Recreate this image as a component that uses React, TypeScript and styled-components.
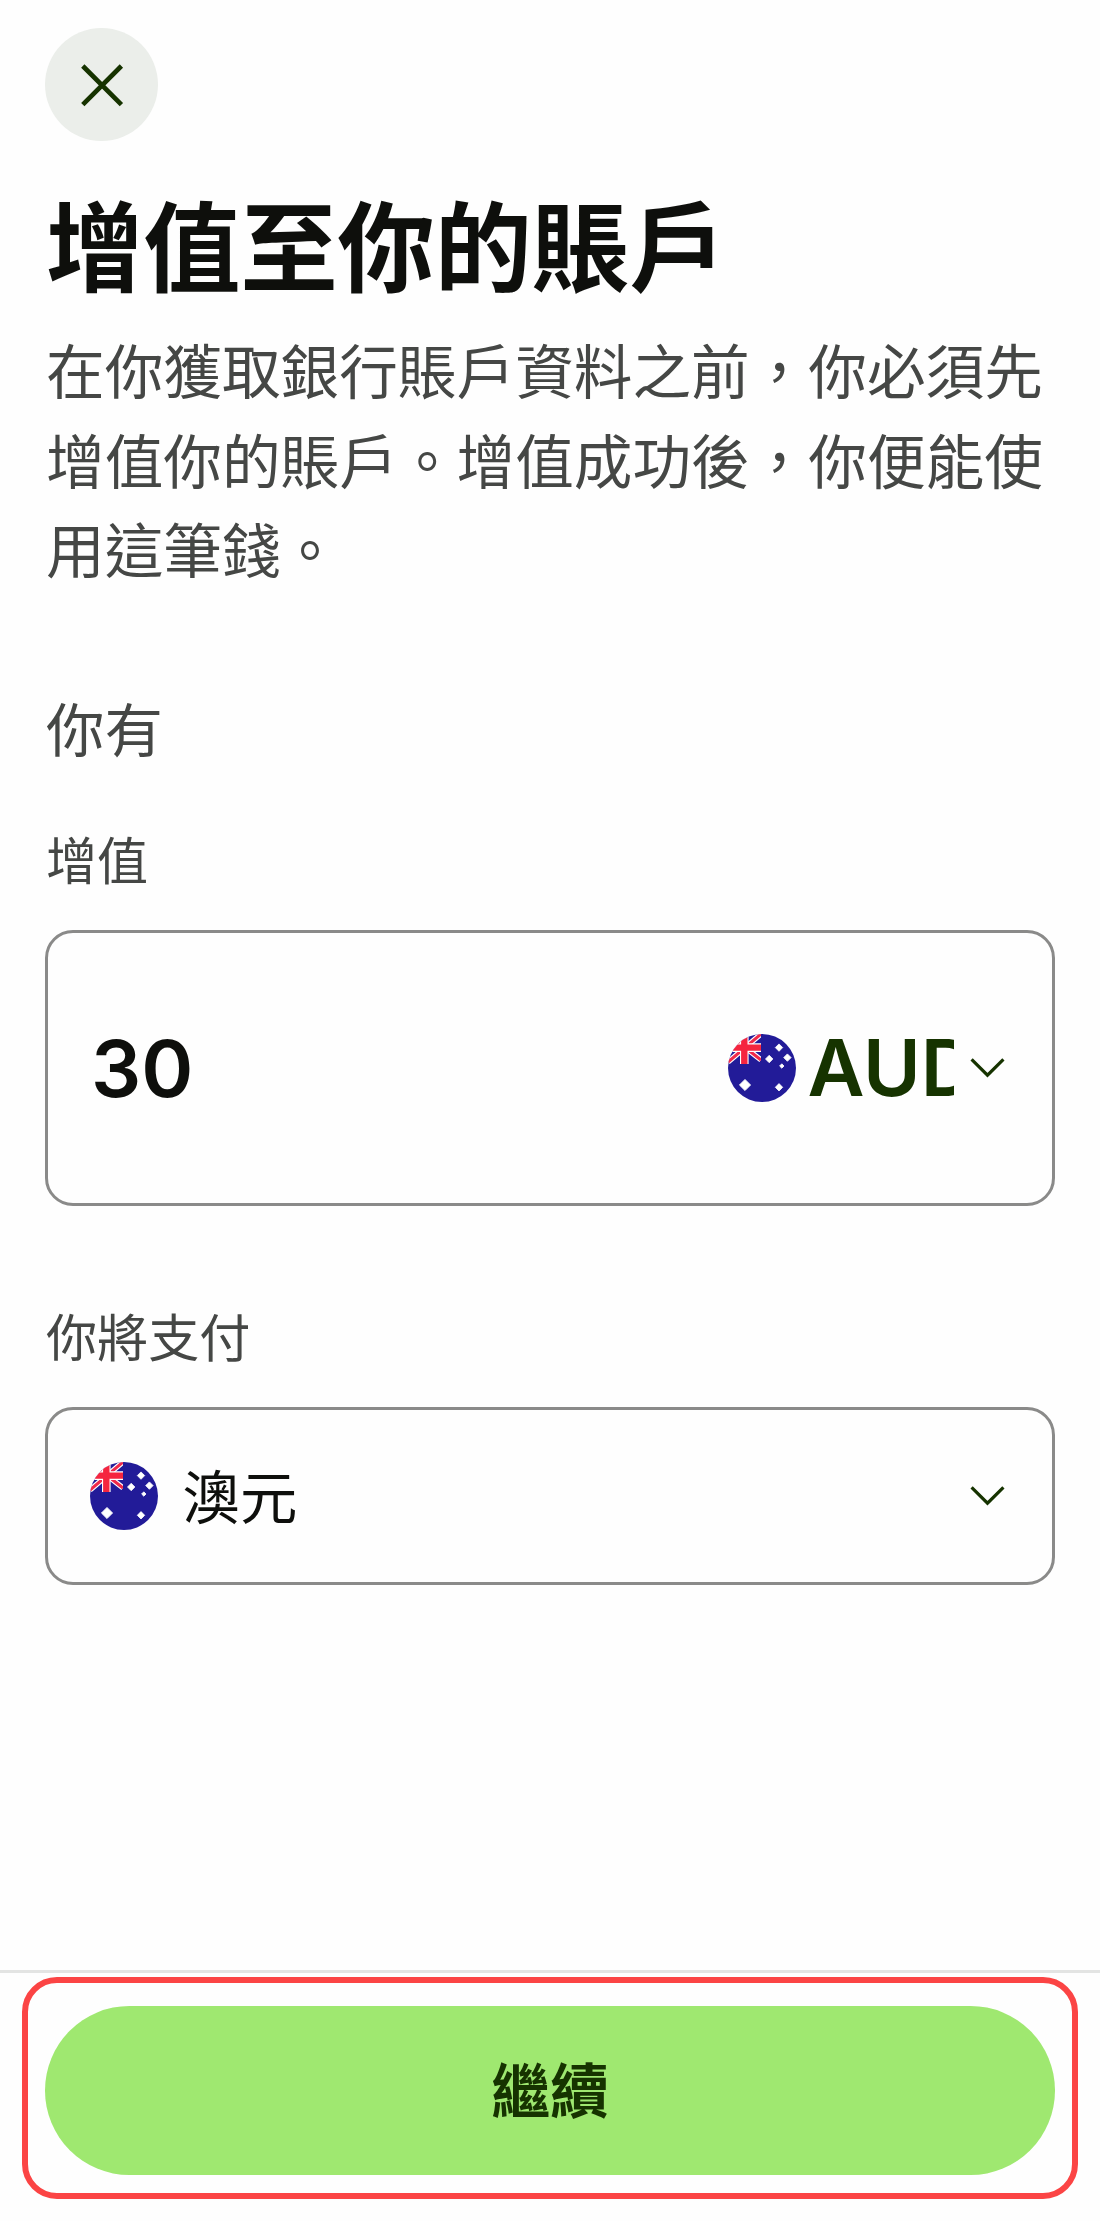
import React from "react";
import styled, { createGlobalStyle } from "styled-components";

const GlobalStyle = createGlobalStyle`
  *, *::before, *::after { box-sizing: border-box; }
  body {
    margin: 0;
    background: #fefefe;
    color: #0e0f0c;
    font-family: "Inter", "Noto Sans CJK TC", sans-serif;
  }
  button { font: inherit; color: inherit; border: 0; background: none; padding: 0; margin: 0; }
`;

const Screen = styled.div`
  display: flex;
  flex-direction: column;
  width: 1100px;
  height: 2221px;
  overflow: hidden;
`;

const Content = styled.main`
  display: flex;
  flex-direction: column;
  align-items: stretch;
  flex: 1;
  padding: 28px 45px 0;
`;

const CloseButton = styled.button`
  display: flex;
  align-items: center;
  justify-content: center;
  width: 113px;
  height: 113px;
  border-radius: 50%;
  background: #ebeeea;
`;

const Title = styled.h1`
  margin: 43px 0 0 1px;
  font-family: "Noto Sans CJK TC", sans-serif;
  font-size: 97.2px;
  font-weight: 700;
  line-height: 116px;
`;

const Description = styled.p`
  margin: 24px -10px 0 1px;
  font-family: "Noto Sans CJK TC", sans-serif;
  font-size: 58.65px;
  line-height: 89.5px;
  color: #454745;
`;

const SectionHeading = styled.h2`
  margin: 92px 0 0 1px;
  font-family: "Noto Sans CJK TC", sans-serif;
  font-size: 58.4px;
  font-weight: 400;
  line-height: 84px;
  color: #454745;
`;

const Field = styled.section<{ $gap: number }>`
  display: flex;
  flex-direction: column;
  gap: 36px;
  margin-top: ${(p) => p.$gap}px;
`;

const Label = styled.span`
  padding-left: 1px;
  font-family: "Noto Sans CJK TC", sans-serif;
  font-size: 51.1px;
  line-height: 72px;
  color: #454745;
`;

const Box = styled.div<{ $height: number }>`
  display: flex;
  align-items: center;
  justify-content: space-between;
  height: ${(p) => p.$height}px;
  padding: 0 47px 0 42px;
  border: 3px solid #8a8a89;
  border-radius: 28px;
`;

const Amount = styled.span`
  padding: 1px 0 0 1px;
  font-size: 79px;
  font-weight: 600;
  line-height: 96px;
`;

const CurrencyPicker = styled.button`
  display: flex;
  align-items: center;
  color: #163300;
`;

const CurrencyCode = styled.span`
  width: 146px;
  margin: 0 16.5px 0 12px;
  padding-top: 1px;
  overflow: hidden;
  text-align: left;
  white-space: nowrap;
  font-size: 78.4px;
  font-weight: 600;
  line-height: 96px;
`;

const CurrencyOption = styled.span`
  display: flex;
  align-items: center;
  gap: 24.5px;
`;

const CurrencyName = styled.span`
  padding-bottom: 4px;
  font-family: "Noto Sans CJK TC", sans-serif;
  font-size: 57.4px;
  line-height: 84px;
`;

const Footer = styled.footer`
  height: 251px;
  border-top: 3px solid #e3e4e3;
  padding: 4px 22px 0;
`;

const Highlight = styled.div`
  height: 222px;
  padding: 22.5px 17px;
  border: 6px solid #fb4444;
  border-radius: 35px;
`;

const ContinueButton = styled.button`
  display: block;
  width: 100%;
  height: 169.5px;
  padding-bottom: 5px;
  border-radius: 85px;
  background: #9fe870;
  color: #163300;
  font-family: "Noto Sans CJK TC", sans-serif;
  font-size: 58.8px;
  font-weight: 700;
  line-height: 84px;
`;

const Glyph = styled.svg`
  display: block;
  flex: none;
`;

const stars = [
  { x: 51, y: 13.6, r: 3.7 },
  { x: 41.2, y: 25, r: 3.7 },
  { x: 59.4, y: 23.6, r: 3.7 },
  { x: 53.8, y: 32, r: 2.2 },
  { x: 17, y: 51, r: 5.6 },
  { x: 51, y: 53.3, r: 3.7 },
];

function AustraliaFlag({ id }: { id: string }) {
  return (
    <Glyph width="68" height="68" viewBox="0 0 68 68">
      <defs>
        <clipPath id={`${id}-disc`}>
          <circle cx="34" cy="34" r="34" />
        </clipPath>
        <clipPath id={`${id}-canton`}>
          <rect width="33" height="30" />
        </clipPath>
      </defs>
      <g clipPath={`url(#${id}-disc)`}>
        <rect width="68" height="68" fill="#221b98" />
        <g clipPath={`url(#${id}-canton)`}>
          <path d="M0 28L33 0M0 0L33 26" stroke="#fff" strokeWidth="5.4" />
          <path d="M0 28L33 0M0 0L33 26" stroke="#f0294a" strokeWidth="3" />
          <path d="M16.3 0V30M0 13.6H33" stroke="#fff" strokeWidth="8.6" />
          <path d="M16.3 0V30M0 13.6H33" stroke="#f5253f" strokeWidth="6.4" />
        </g>
        {stars.map((s) => (
          <path
            key={`${s.x}-${s.y}`}
            d={`M${s.x} ${s.y - s.r}l${s.r} ${s.r}l${-s.r} ${s.r}l${-s.r} ${-s.r}z`}
            fill="#fff"
            stroke="#fff"
            strokeWidth="0.8"
            strokeLinejoin="round"
          />
        ))}
      </g>
    </Glyph>
  );
}

function Chevron() {
  return (
    <Glyph width="35" height="22" viewBox="0 0 35 22">
      <path d="M1.6 2.4L17.5 18.2L33.4 2.4" fill="none" stroke="#163300" strokeWidth="3.2" />
    </Glyph>
  );
}

export default function App() {
  return (
    <>
      <GlobalStyle />
      <Screen lang="zh-Hant">
        <Content>
          <CloseButton aria-label="關閉">
            <Glyph width="44" height="44" viewBox="0 0 44 44">
              <path d="M2.8 3L41.4 41.6M41.4 3L2.8 41.6" stroke="#163300" strokeWidth="4.7" />
            </Glyph>
          </CloseButton>
          <Title>增值至你的賬戶</Title>
          <Description>
            在你獲取銀行賬戶資料之前，你必須先增值你的賬戶。增值成功後，你便能使用這筆錢。
          </Description>
          <SectionHeading>你有</SectionHeading>
          <Field $gap={53}>
            <Label>增值</Label>
            <Box $height={276}>
              <Amount>30</Amount>
              <CurrencyPicker>
                <AustraliaFlag id="amount" />
                <CurrencyCode>AUD</CurrencyCode>
                <Chevron />
              </CurrencyPicker>
            </Box>
          </Field>
          <Field $gap={93.5}>
            <Label>你將支付</Label>
            <Box $height={178}>
              <CurrencyOption>
                <AustraliaFlag id="pay" />
                <CurrencyName>澳元</CurrencyName>
              </CurrencyOption>
              <Chevron />
            </Box>
          </Field>
        </Content>
        <Footer>
          <Highlight>
            <ContinueButton>繼續</ContinueButton>
          </Highlight>
        </Footer>
      </Screen>
    </>
  );
}
